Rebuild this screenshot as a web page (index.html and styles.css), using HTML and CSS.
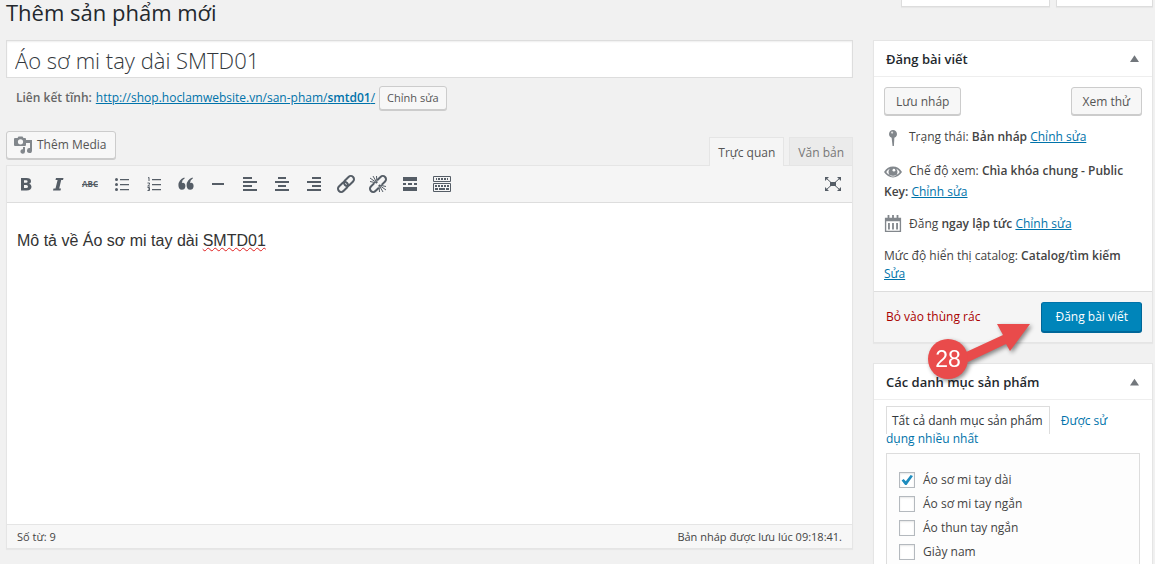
FILE: index.html
```html
<!DOCTYPE html>
<html lang="vi">
<head>
<meta charset="utf-8">
<meta name="viewport" content="width=device-width, initial-scale=1">
<title>Thêm sản phẩm mới</title>
<link rel="stylesheet" href="styles.css">
</head>
<body>
<header class="topbar">
  <h1 class="page-title">Thêm sản phẩm mới</h1>
  <div class="screen-tabs"><span class="screen-tab screen-tab-wide"></span><span class="screen-tab"></span></div>
</header>
<div class="layout">
  <main class="main">
    <input class="title-input" type="text" aria-label="Tên sản phẩm" value="Áo sơ mi tay dài SMTD01">
    <div class="permalink">
      <strong>Liên kết tĩnh:</strong>
      <a href="#">http://shop.hoclamwebsite.vn/san-pham/<b>smtd01</b>/</a>
      <button class="btn btn-small" type="button">Chỉnh sửa</button>
    </div>
    <div class="editor-tools">
      <button class="btn btn-media" type="button">
        <svg class="icon icon-muted" viewBox="0 0 20 20"><path fill-rule="evenodd" d="M2 3h2.500L5.500 1.500h4L10.500 3H12q1 0 1 1v6q0 1-1 1H2q-1 0-1-1V4q0-1 1-1zm5.500 1.200a2.600 2.600 0 1 0 0 5.200 2.600 2.600 0 0 0 0-5.200z"/><path d="M13 5h6v10.500a2.500 2.500 0 1 1-2-2.400V8h-4zM10 12h2v4.500a2.300 2.300 0 1 1-2-2.300z"/></svg>
        Thêm Media
      </button>
      <div class="editor-tabs">
        <button class="editor-tab editor-tab-active" type="button">Trực quan</button>
        <button class="editor-tab" type="button">Văn bản</button>
      </div>
    </div>
    <section class="editor">
      <div class="toolbar">
        <button class="tool" type="button" aria-label="Đậm"><svg class="icon" viewBox="0 0 20 20"><path fill-rule="evenodd" d="M5 4h5.500q4.500 0 4.500 3.200 0 2-1.900 2.600 2.400.6 2.400 3 0 3.700-5 3.700H5zm3 2.200v2.600h2.100q1.500 0 1.500-1.300t-1.600-1.300zm0 4.700v3.200h2.300q1.700 0 1.700-1.600T10.300 10.900z"/></svg></button>
        <button class="tool" type="button" aria-label="Nghiêng"><svg class="icon" viewBox="0 0 20 20"><path d="M8 4h7.500L15 6h-1.800l-2 8.500H13l-.5 2H5l.5-2h2L9.600 6H7.500z"/></svg></button>
        <button class="tool tool-strike" type="button" aria-label="Gạch ngang"><s>ABC</s></button>
        <button class="tool" type="button" aria-label="Danh sách"><svg class="icon" viewBox="0 0 20 20"><path d="M8 5h9v1.300H8zM8 10h9v1.300H8zM8 15h9v1.300H8z"/><circle cx="4.500" cy="5.500" r="1.500"/><circle cx="4.500" cy="10.500" r="1.500"/><circle cx="4.500" cy="15.500" r="1.500"/></svg></button>
        <button class="tool" type="button" aria-label="Danh sách số"><svg class="icon" viewBox="0 0 20 20"><path d="M8 5h9v1.300H8zM8 10h9v1.300H8zM8 15h9v1.300H8z"/><path class="line thin" d="M4 4l1-.6V7M3.500 9h2v1.300L3.700 12H6M3.500 13.500h2v3h-2m.5-1.500h1.500"/></svg></button>
        <button class="tool" type="button" aria-label="Trích dẫn"><svg class="icon" viewBox="0 0 20 20"><path d="M8.800 4.300q-2.900 1.500-3 4.700.5-.2 1.100-.2 2.500.3 2.500 3.400-.3 3.500-3.500 3.600Q2.400 15.500 2.400 11 2.700 5.600 8.200 3.500zM17 4.300q-2.900 1.500-3 4.700.5-.2 1.100-.2 2.500.3 2.500 3.400-.3 3.500-3.500 3.600-3.500-.3-3.500-4.800.3-5.400 5.800-7.500z"/></svg></button>
        <button class="tool" type="button" aria-label="Đường kẻ"><svg class="icon" viewBox="0 0 20 20"><path d="M4 9h12v2H4z"/></svg></button>
        <button class="tool" type="button" aria-label="Căn trái"><svg class="icon" viewBox="0 0 20 20"><path d="M3 3h9v2H3zM3 7h14v2H3zM3 11h9v2H3zM3 15h14v2H3z"/></svg></button>
        <button class="tool" type="button" aria-label="Căn giữa"><svg class="icon" viewBox="0 0 20 20"><path d="M6 3h8v2H6zM3 7h14v2H3zM6 11h8v2H6zM3 15h14v2H3z"/></svg></button>
        <button class="tool" type="button" aria-label="Căn phải"><svg class="icon" viewBox="0 0 20 20"><path d="M8 3h9v2H8zM3 7h14v2H3zM8 11h9v2H8zM3 15h14v2H3z"/></svg></button>
        <button class="tool" type="button" aria-label="Liên kết"><svg class="icon" viewBox="0 0 20 20"><g class="line" transform="rotate(-45 10 10)"><rect x="0" y="6.800" width="11.500" height="6.400" rx="3.200"/><rect x="8.500" y="6.800" width="11.500" height="6.400" rx="3.200"/></g></svg></button>
        <button class="tool" type="button" aria-label="Bỏ liên kết"><svg class="icon" viewBox="0 0 20 20"><g class="line" transform="rotate(-45 10 10)"><path d="M8 6.800H3.200a3.200 3.200 0 0 0 0 6.400H8M12 6.800h4.800a3.200 3.200 0 0 1 0 6.400H12"/></g><path class="line thin" d="M9 9L2 4M9 9L5 2M9 9L8.500 2M9 9L2 7.500M11 11l7 5M11 11l4 7M11 11l.5 7M11 11l7 1.500"/></svg></button>
        <button class="tool" type="button" aria-label="Thẻ đọc thêm"><svg class="icon" viewBox="0 0 20 20"><path d="M3 3h14v4H3zM3 9h3v2H3zM8 9h4v2H8zM14 9h3v2h-3zM3 13h14v4H3z"/></svg></button>
        <button class="tool" type="button" aria-label="Thanh công cụ"><svg class="icon" viewBox="0 0 20 20"><path class="line frame" d="M1.500 2.500h17v5h-17zM1.500 9.500h17v8h-17z"/><path d="M4 4h1v2H4zM6 4h2v2H6zM9 4h2v2H9zM12 4h2v2h-2zM15 4h1v2h-1zM3 11h2v2H3zM6 11h2v2H6zM9 11h2v2H9zM12 11h2v2h-2zM15 11h2v2h-2zM3 14h3v2H3zM7 14h6v2H7zM14 14h3v2h-3z"/></svg></button>
        <button class="tool tool-end" type="button" aria-label="Toàn màn hình"><svg class="icon" viewBox="0 0 20 20"><path d="M7 8h6v4H7zM2 3h4L2 7zM18 3h-4l4 4zM2 17h4l-4-4zM18 17h-4l4-4z"/><path class="line fine" d="M3 4l5 4.500M17 4l-5 4.500M3 16l5-4.500M17 16l-5-4.500"/></svg></button>
      </div>
      <div class="editor-body" contenteditable="true" spellcheck="false" role="textbox" aria-label="Nội dung">Mô tả về Áo sơ mi tay dài <span class="misspelled">SMTD01</span></div>
      <div class="status"><span>Số từ: 9</span><span>Bản nháp được lưu lúc 09:18:41.</span></div>
    </section>
  </main>
  <aside class="sidebar">
    <section class="box">
      <div class="box-head"><h2>Đăng bài viết</h2><button class="toggle" type="button" aria-label="Thu gọn"></button></div>
      <div class="publish">
        <div class="publish-actions"><button class="btn" type="button">Lưu nháp</button><button class="btn" type="button">Xem thử</button></div>
        <p class="row"><svg class="icon icon-muted" viewBox="0 0 20 20"><path d="M10 1a4.500 4.500 0 0 1 1.500 8.700L11 19H9.500L8.500 9.700A4.500 4.500 0 0 1 10 1z"/><circle cx="9" cy="4" r="1.200" fill="#ddd"/></svg>Trạng thái: <b>Bản nháp</b> <a href="#">Chỉnh sửa</a></p>
        <p class="row"><svg class="icon icon-muted" viewBox="0 0 20 20"><path fill-rule="evenodd" d="M0 10Q4 4 10 4T20 10Q16 16 10 16T0 10zM2.500 10q3 4.200 7.500 4.200t7.500-4.200Q16 7.500 13.500 6.500a5 5 0 1 1-7 0Q4 7.500 2.500 10z"/><circle cx="10" cy="9.500" r="4"/><circle cx="11" cy="8" r="1.500" fill="#fff"/></svg>Chế độ xem: <b>Chìa khóa chung - Public Key:</b> <a href="#">Chỉnh sửa</a></p>
        <p class="row"><svg class="icon icon-muted" viewBox="0 0 20 20"><path fill-rule="evenodd" d="M4 0h2v3h3V0h2v3h3V0h2v3h3v16H1V3h3zM2.500 7v10.500h15V7zM4.500 9h2v7h-2zM9 9h2v7H9zM13.500 9h2v7h-2z"/></svg>Đăng <b>ngay lập tức</b> <a href="#">Chỉnh sửa</a></p>
        <p class="row row-plain">Mức độ hiển thị catalog: <b>Catalog/tìm kiếm</b> <a href="#">Sửa</a></p>
      </div>
      <div class="box-foot">
        <a class="trash" href="#">Bỏ vào thùng rác</a>
        <button class="btn btn-primary" type="button">Đăng bài viết</button>
        <svg class="callout" viewBox="0 0 106 66"><path d="M38 34L77 16L71 5L104 5L84 32L80 25L42 43Z"/><circle cx="22" cy="40" r="20"/><text x="22" y="48">28</text></svg>
      </div>
    </section>
    <section class="box">
      <div class="box-head"><h2>Các danh mục sản phẩm</h2><button class="toggle" type="button" aria-label="Thu gọn"></button></div>
      <div class="categories">
        <div class="cat-tabs"><a class="cat-tab-active" href="#">Tất cả danh mục sản phẩm</a><a href="#">Được sử dụng nhiều nhất</a></div>
        <div class="cat-list">
          <label><input type="checkbox" checked>Áo sơ mi tay dài</label>
          <label><input type="checkbox">Áo sơ mi tay ngắn</label>
          <label><input type="checkbox">Áo thun tay ngắn</label>
          <label><input type="checkbox">Giày nam</label>
        </div>
      </div>
    </section>
  </aside>
</div>
</body>
</html>
```
FILE: styles.css
```css
* { box-sizing: border-box; }
body {
  margin: 0;
  height: 100vh;
  overflow: hidden;
  background: #f1f1f1;
  color: #444;
  font: 12px/18px "Open Sans", "Noto Sans", sans-serif;
}
button, input { font: inherit; color: inherit; }
a { color: #0073aa; }
b, strong { font-weight: 600; }
.icon { width: 20px; height: 20px; fill: #555d66; flex: none; }
.icon-muted { fill: #82878c; }
.line { fill: none; stroke: #555d66; stroke-width: 2; }
.thin, .frame, .fine { stroke-width: 1; }

.topbar { display: flex; justify-content: space-between; align-items: flex-start; height: 40px; padding: 0 2px 0 6px; }
.page-title { margin: 0; font-size: 22px; line-height: 24px; font-weight: 400; color: #23282d; }
.screen-tabs { display: flex; gap: 6px; }
.screen-tab { width: 97px; height: 7px; background: #fff; border: 1px solid #ddd; border-top: 0; box-shadow: 0 1px 1px rgba(0,0,0,.04); }
.screen-tab-wide { width: 149px; }

.layout { display: grid; grid-template-columns: minmax(0, 1fr) 280px; gap: 20px; padding: 0 2px 0 6px; align-items: start; }
.title-input { display: block; width: 100%; height: 38px; padding: 1px 8px 0; border: 1px solid #ddd; background: #fff; color: #32373c; font-size: 22px; font-weight: 300; box-shadow: inset 0 1px 2px rgba(0,0,0,.07); }
.permalink { display: flex; align-items: center; gap: 4px; padding: 8px 10px 0; color: #666; }

.btn { height: 28px; padding: 1px 11px 0; border: 1px solid #ccc; border-radius: 3px; background: #f7f7f7; color: #555; box-shadow: 0 1px 0 #ccc; }
.btn-small { height: 24px; padding: 0 7px; font-size: 11px; }
.btn-media { display: flex; align-items: center; gap: 4px; padding: 0 8px 0 6px; }
.btn-primary { height: 30px; padding: 0 13px; background: #0085ba; border-color: #0073aa #006799 #006799; color: #fff; box-shadow: 0 1px 0 #006799; }

.editor-tools { display: flex; justify-content: space-between; align-items: flex-start; padding-top: 21px; }
.editor-tabs { display: flex; gap: 5px; padding-top: 6px; }
.editor-tab { height: 28px; padding: 2px 8px 0; border: 1px solid #e5e5e5; border-bottom: 0; background: #ebebeb; color: #777; }
.editor-tab-active { height: 29px; margin-bottom: -1px; background: #f5f5f5; color: #555; z-index: 1; }
.editor { border: 1px solid #e5e5e5; background: #fff; box-shadow: 0 1px 1px rgba(0,0,0,.04); }
.toolbar { display: flex; align-items: center; height: 37px; padding: 0 3px; background: #f5f5f5; border-bottom: 1px solid #ddd; }
.tool { display: flex; align-items: center; justify-content: center; width: 32px; height: 30px; padding: 0; border: 0; background: none; color: #555d66; }
.tool-strike { font-size: 8px; font-weight: 700; }
.tool-end { margin-left: auto; }
.editor-body { min-height: 321px; padding: 26px 10px; color: #333; font: 16px/24px "Liberation Sans", Arial, sans-serif; outline: 0; }
.misspelled { text-decoration: underline wavy #e02020 1px; text-underline-offset: 1px; }
.status { display: flex; justify-content: space-between; padding: 3px 10px 2px; border-top: 1px solid #e5e5e5; background: #f7f7f7; font-size: 11px; }

.sidebar { display: grid; gap: 20px; }
.box { min-width: 0; border: 1px solid #e5e5e5; background: #fff; box-shadow: 0 1px 1px rgba(0,0,0,.04); }
.box-head { display: flex; align-items: center; justify-content: space-between; height: 36px; padding: 0 13px 0 12px; border-bottom: 1px solid #eee; }
.box-head h2 { margin: 0; font-size: 13px; font-weight: 600; color: #23282d; }
.toggle { width: 9px; height: 9px; padding: 0; border: 0; background: #72777c; clip-path: polygon(50% 15%, 100% 90%, 0 90%); }
.publish { padding: 10px 10px 8px; }
.publish-actions { display: flex; justify-content: space-between; padding-bottom: 12px; }
.row { margin: 0; padding-bottom: 13px; line-height: 19px; }
.row .icon { width: 18px; height: 20px; margin-right: 7px; vertical-align: middle; }
.row-plain { padding-bottom: 0; line-height: 18px; }
.box-foot { position: relative; display: flex; justify-content: space-between; align-items: center; height: 51px; padding: 0 10px 0 12px; border-top: 1px solid #ddd; background: #f5f5f5; }
.trash { color: #a00; text-decoration: none; }
.callout { position: absolute; right: 120px; top: 27px; width: 106px; height: 66px; overflow: visible; z-index: 2; fill: #e94b4b; filter: drop-shadow(2px 2px 2px rgba(0,0,0,.45)); pointer-events: none; }
.callout text { fill: #fff; font: 23px "Liberation Sans", Arial, sans-serif; text-anchor: middle; }

.categories { padding: 8px 12px; }
.cat-tabs { line-height: 18px; padding: 4px 20px 0 0; }
.cat-tabs a { text-decoration: none; }
.cat-tabs .cat-tab-active { padding: 5px 6px 5px 5px; margin-right: 11px; border: 1px solid #ddd; border-bottom: 0; color: #32373c; }
.cat-list { margin-top: 5px; padding: 14px 12px; border: 1px solid #ddd; background: #fdfdfd; }
.cat-list label { display: flex; align-items: center; gap: 8px; height: 24px; }
.cat-list input { appearance: none; display: grid; width: 16px; height: 16px; margin: 0; border: 1px solid #b4b9be; background: #fff; box-shadow: inset 0 1px 2px rgba(0,0,0,.1); }
.cat-list input:checked::before { content: ""; width: 12px; height: 11px; margin: 1px; background: #1e8cbe; clip-path: polygon(5% 55%, 22% 42%, 40% 62%, 80% 5%, 100% 15%, 45% 100%, 36% 100%); }
```
